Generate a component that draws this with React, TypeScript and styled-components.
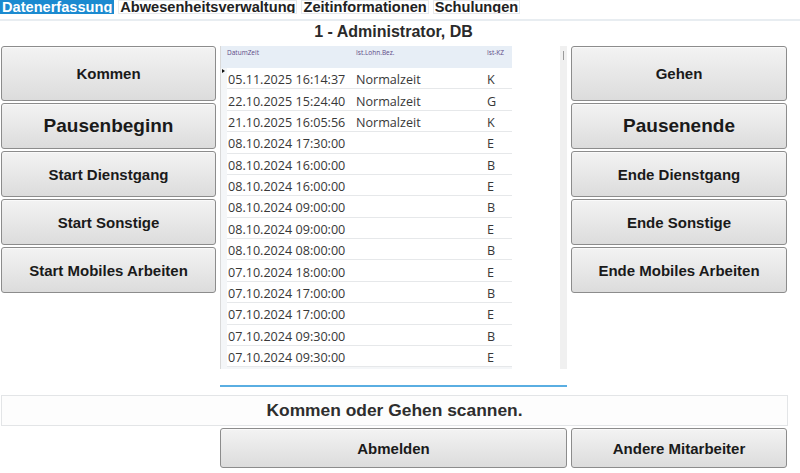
import React from "react";
import styled, { createGlobalStyle } from "styled-components";

const Global = createGlobalStyle`
  html, body { margin: 0; padding: 0; background: #ffffff; }
  body { font-family: "Liberation Sans", Arial, sans-serif; color: #222; }
  * { box-sizing: border-box; }
`;

const Page = styled.div`
  width: 800px;
  height: 473px;
  overflow: hidden;
  background: #fff;
`;

const TabBar = styled.div`
  display: flex;
  gap: 4px;
  height: 15px;
  overflow: hidden;
`;

const Tab = styled.div<{ $active?: boolean }>`
  font-size: 14.6px;
  font-weight: bold;
  line-height: 13px;
  height: 14px;
  padding: 0 1px;
  overflow: hidden;
  white-space: nowrap;
  border: 1px solid ${(p) => (p.$active ? "#1b8ad0" : "#e6e9ec")};
  background: ${(p) => (p.$active ? "#1b8ad0" : "#fff")};
  color: ${(p) => (p.$active ? "#fff" : "#222")};
`;

const Divider = styled.div`
  margin-top: 4px;
  height: 2px;
  background: #e8edf1;
`;

const Title = styled.div`
  width: 787px;
  text-align: center;
  font-size: 16px;
  font-weight: bold;
  line-height: 20px;
  height: 25px;
  padding-top: 1px;
  color: #2a2a2a;
`;

const Main = styled.div`
  display: grid;
  grid-template-columns: 215px 347px 216px;
  column-gap: 4px;
  padding-left: 1px;
  align-items: start;
`;

const ButtonColumn = styled.div`
  display: flex;
  flex-direction: column;
  gap: 2px;
`;

const Btn = styled.button<{ $h: number; $big?: boolean }>`
  height: ${(p) => p.$h}px;
  width: 100%;
  margin: 0;
  padding: 0;
  border: 1px solid #8c8c8c;
  border-radius: 3px;
  background: linear-gradient(#f3f3f3, #dcdcdc);
  font-family: "Liberation Sans", Arial, sans-serif;
  font-weight: bold;
  font-size: ${(p) => (p.$big ? 19 : 15)}px;
  color: #1a1a1a;
  box-shadow: inset 0 1px 0 #fafafa;
`;

const GridPanel = styled.div`
  height: 341px;
  display: flex;
  flex-direction: column;
  border-bottom: 2px solid #5aaee2;
`;

const GridBody = styled.div`
  display: flex;
  height: 323px;
  background: #f5f5f5;
`;

const Table = styled.div`
  width: 292px;
  display: flex;
  flex-direction: column;
  border-left: 1px solid #d9d9d9;
  background: #f4f6f8;
`;

const HeaderRow = styled.div`
  height: 22px;
  display: grid;
  grid-template-columns: 6px 129px 131px 1fr;
  background: #e7eef6;
  padding-top: 3px;
`;

const HeadCell = styled.div`
  font-family: "Open Sans", "Noto Sans", sans-serif;
  font-size: 6.5px;
  line-height: 8px;
  color: #5c4a86;
  white-space: nowrap;
`;

const Row = styled.div`
  height: 21.38px;
  display: grid;
  grid-template-columns: 6px 129px 131px 1fr;
  align-items: center;
`;

const Selector = styled.div`
  height: 100%;
  position: relative;
`;

const Arrow = styled.span`
  position: absolute;
  left: 1px;
  top: 1px;
  width: 0;
  height: 0;
  border-top: 2px solid transparent;
  border-bottom: 2px solid transparent;
  border-left: 3px solid #111;
`;

const Cell = styled.div<{ $first?: boolean }>`
  height: 100%;
  display: flex;
  align-items: center;
  background: #fff;
  border-bottom: 1px solid #e6e8ea;
  padding-top: 3px;
  padding-left: ${(p) => (p.$first ? 1 : 0)}px;
  font-family: "Open Sans", "Noto Sans", sans-serif;
  font-size: 12.6px;
  color: #383838;
  white-space: nowrap;
`;

const Filler = styled.div`
  flex: 1;
  background: #fff;
`;

const ScrollTrack = styled.div`
  width: 7px;
  background: #f0f0f0;
  position: relative;
`;

const Thumb = styled.div`
  position: absolute;
  left: 3px;
  top: 5px;
  width: 1px;
  height: 9px;
  background: #9a9a9a;
`;

const Status = styled.div`
  margin: 8px 0 0 1px;
  width: 787px;
  height: 31px;
  border: 1px solid #e3e5e7;
  background: #fdfdfd;
  display: flex;
  align-items: center;
  justify-content: center;
  font-size: 17.4px;
  font-weight: bold;
  color: #2e2e2e;
`;

const BottomRow = styled.div`
  display: grid;
  grid-template-columns: 347px 216px;
  column-gap: 4px;
  padding-left: 220px;
  margin-top: 2px;
`;

const rows: [string, string, string][] = [
  ["05.11.2025 16:14:37", "Normalzeit", "K"],
  ["22.10.2025 15:24:40", "Normalzeit", "G"],
  ["21.10.2025 16:05:56", "Normalzeit", "K"],
  ["08.10.2024 17:30:00", "", "E"],
  ["08.10.2024 16:00:00", "", "B"],
  ["08.10.2024 16:00:00", "", "E"],
  ["08.10.2024 09:00:00", "", "B"],
  ["08.10.2024 09:00:00", "", "E"],
  ["08.10.2024 08:00:00", "", "B"],
  ["07.10.2024 18:00:00", "", "E"],
  ["07.10.2024 17:00:00", "", "B"],
  ["07.10.2024 17:00:00", "", "E"],
  ["07.10.2024 09:30:00", "", "B"],
  ["07.10.2024 09:30:00", "", "E"],
];

const left: [string, number, boolean][] = [
  ["Kommen", 55, false],
  ["Pausenbeginn", 46, true],
  ["Start Dienstgang", 46, false],
  ["Start Sonstige", 46, false],
  ["Start Mobiles Arbeiten", 46, false],
];
const right: [string, number, boolean][] = [
  ["Gehen", 55, false],
  ["Pausenende", 46, true],
  ["Ende Dienstgang", 46, false],
  ["Ende Sonstige", 46, false],
  ["Ende Mobiles Arbeiten", 46, false],
];

export default function App() {
  return (
    <Page>
      <Global />
      <TabBar>
        <Tab $active>Datenerfassung</Tab>
        <Tab>Abwesenheitsverwaltung</Tab>
        <Tab>Zeitinformationen</Tab>
        <Tab>Schulungen</Tab>
      </TabBar>
      <Divider />
      <Title>1 - Administrator, DB</Title>
      <Main>
        <ButtonColumn>
          {left.map(([t, h, b]) => (
            <Btn key={t} $h={h} $big={b}>{t}</Btn>
          ))}
        </ButtonColumn>
        <GridPanel>
          <GridBody>
            <Table>
              <HeaderRow>
                <span />
                <HeadCell>DatumZeit</HeadCell>
                <HeadCell>Ist.Lohn.Bez.</HeadCell>
                <HeadCell>Ist-KZ</HeadCell>
              </HeaderRow>
              {rows.map((r, i) => (
                <Row key={i}>
                  <Selector>{i === 0 && <Arrow />}</Selector>
                  <Cell $first>{r[0]}</Cell>
                  <Cell>{r[1]}</Cell>
                  <Cell>{r[2]}</Cell>
                </Row>
              ))}
            </Table>
            <Filler />
            <ScrollTrack>
              <Thumb />
            </ScrollTrack>
          </GridBody>
        </GridPanel>
        <ButtonColumn>
          {right.map(([t, h, b]) => (
            <Btn key={t} $h={h} $big={b}>{t}</Btn>
          ))}
        </ButtonColumn>
      </Main>
      <Status>Kommen oder Gehen scannen.</Status>
      <BottomRow>
        <Btn $h={40}>Abmelden</Btn>
        <Btn $h={40}>Andere Mitarbeiter</Btn>
      </BottomRow>
    </Page>
  );
}
